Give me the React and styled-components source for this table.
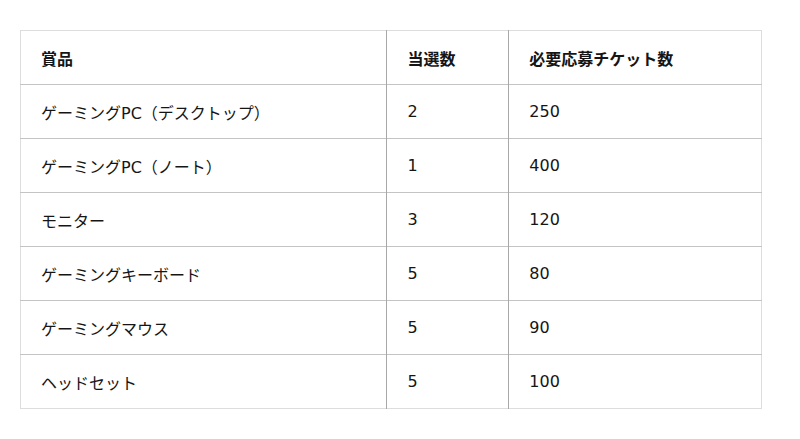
import React from "react";
import styled, { createGlobalStyle } from "styled-components";

const GlobalStyle = createGlobalStyle`
  body {
    margin: 0;
    background: #ffffff;
    font-family: "DejaVu Sans", "Noto Sans CJK JP", sans-serif;
    color: #151515;
  }
`;

const Wrapper = styled.div`
  padding: 30px 20px;
`;

const Table = styled.table`
  width: 742px;
  border-collapse: collapse;
  border: 1px solid #dddddd;
  font-size: 16px;
`;

const HeadCell = styled.th`
  height: 53px;
  padding: 0 20px;
  text-align: left;
  font-weight: bold;
  width: ${(props) => props.width}px;
  & + & {
    border-left: 1px solid #a8a8a8;
  }
`;

const Row = styled.tr`
  border-top: 1px solid #c4c4c4;
`;

const Cell = styled.td`
  height: 53px;
  padding: 0 20px;
  & + & {
    border-left: 1px solid #a8a8a8;
  }
`;

const prizes = [
  ["ゲーミングPC（デスクトップ）", "2", "250"],
  ["ゲーミングPC（ノート）", "1", "400"],
  ["モニター", "3", "120"],
  ["ゲーミングキーボード", "5", "80"],
  ["ゲーミングマウス", "5", "90"],
  ["ヘッドセット", "5", "100"],
];

const App = () => {
  return (
    <Wrapper>
      <GlobalStyle />
      <Table>
        <thead>
          <tr>
            <HeadCell width={326}>賞品</HeadCell>
            <HeadCell width={81}>当選数</HeadCell>
            <HeadCell width={212}>必要応募チケット数</HeadCell>
          </tr>
        </thead>
        <tbody>
          {prizes.map((row) => (
            <Row key={row[0]}>
              {row.map((cell, i) => (
                <Cell key={i}>{cell}</Cell>
              ))}
            </Row>
          ))}
        </tbody>
      </Table>
    </Wrapper>
  );
};

export default App;
